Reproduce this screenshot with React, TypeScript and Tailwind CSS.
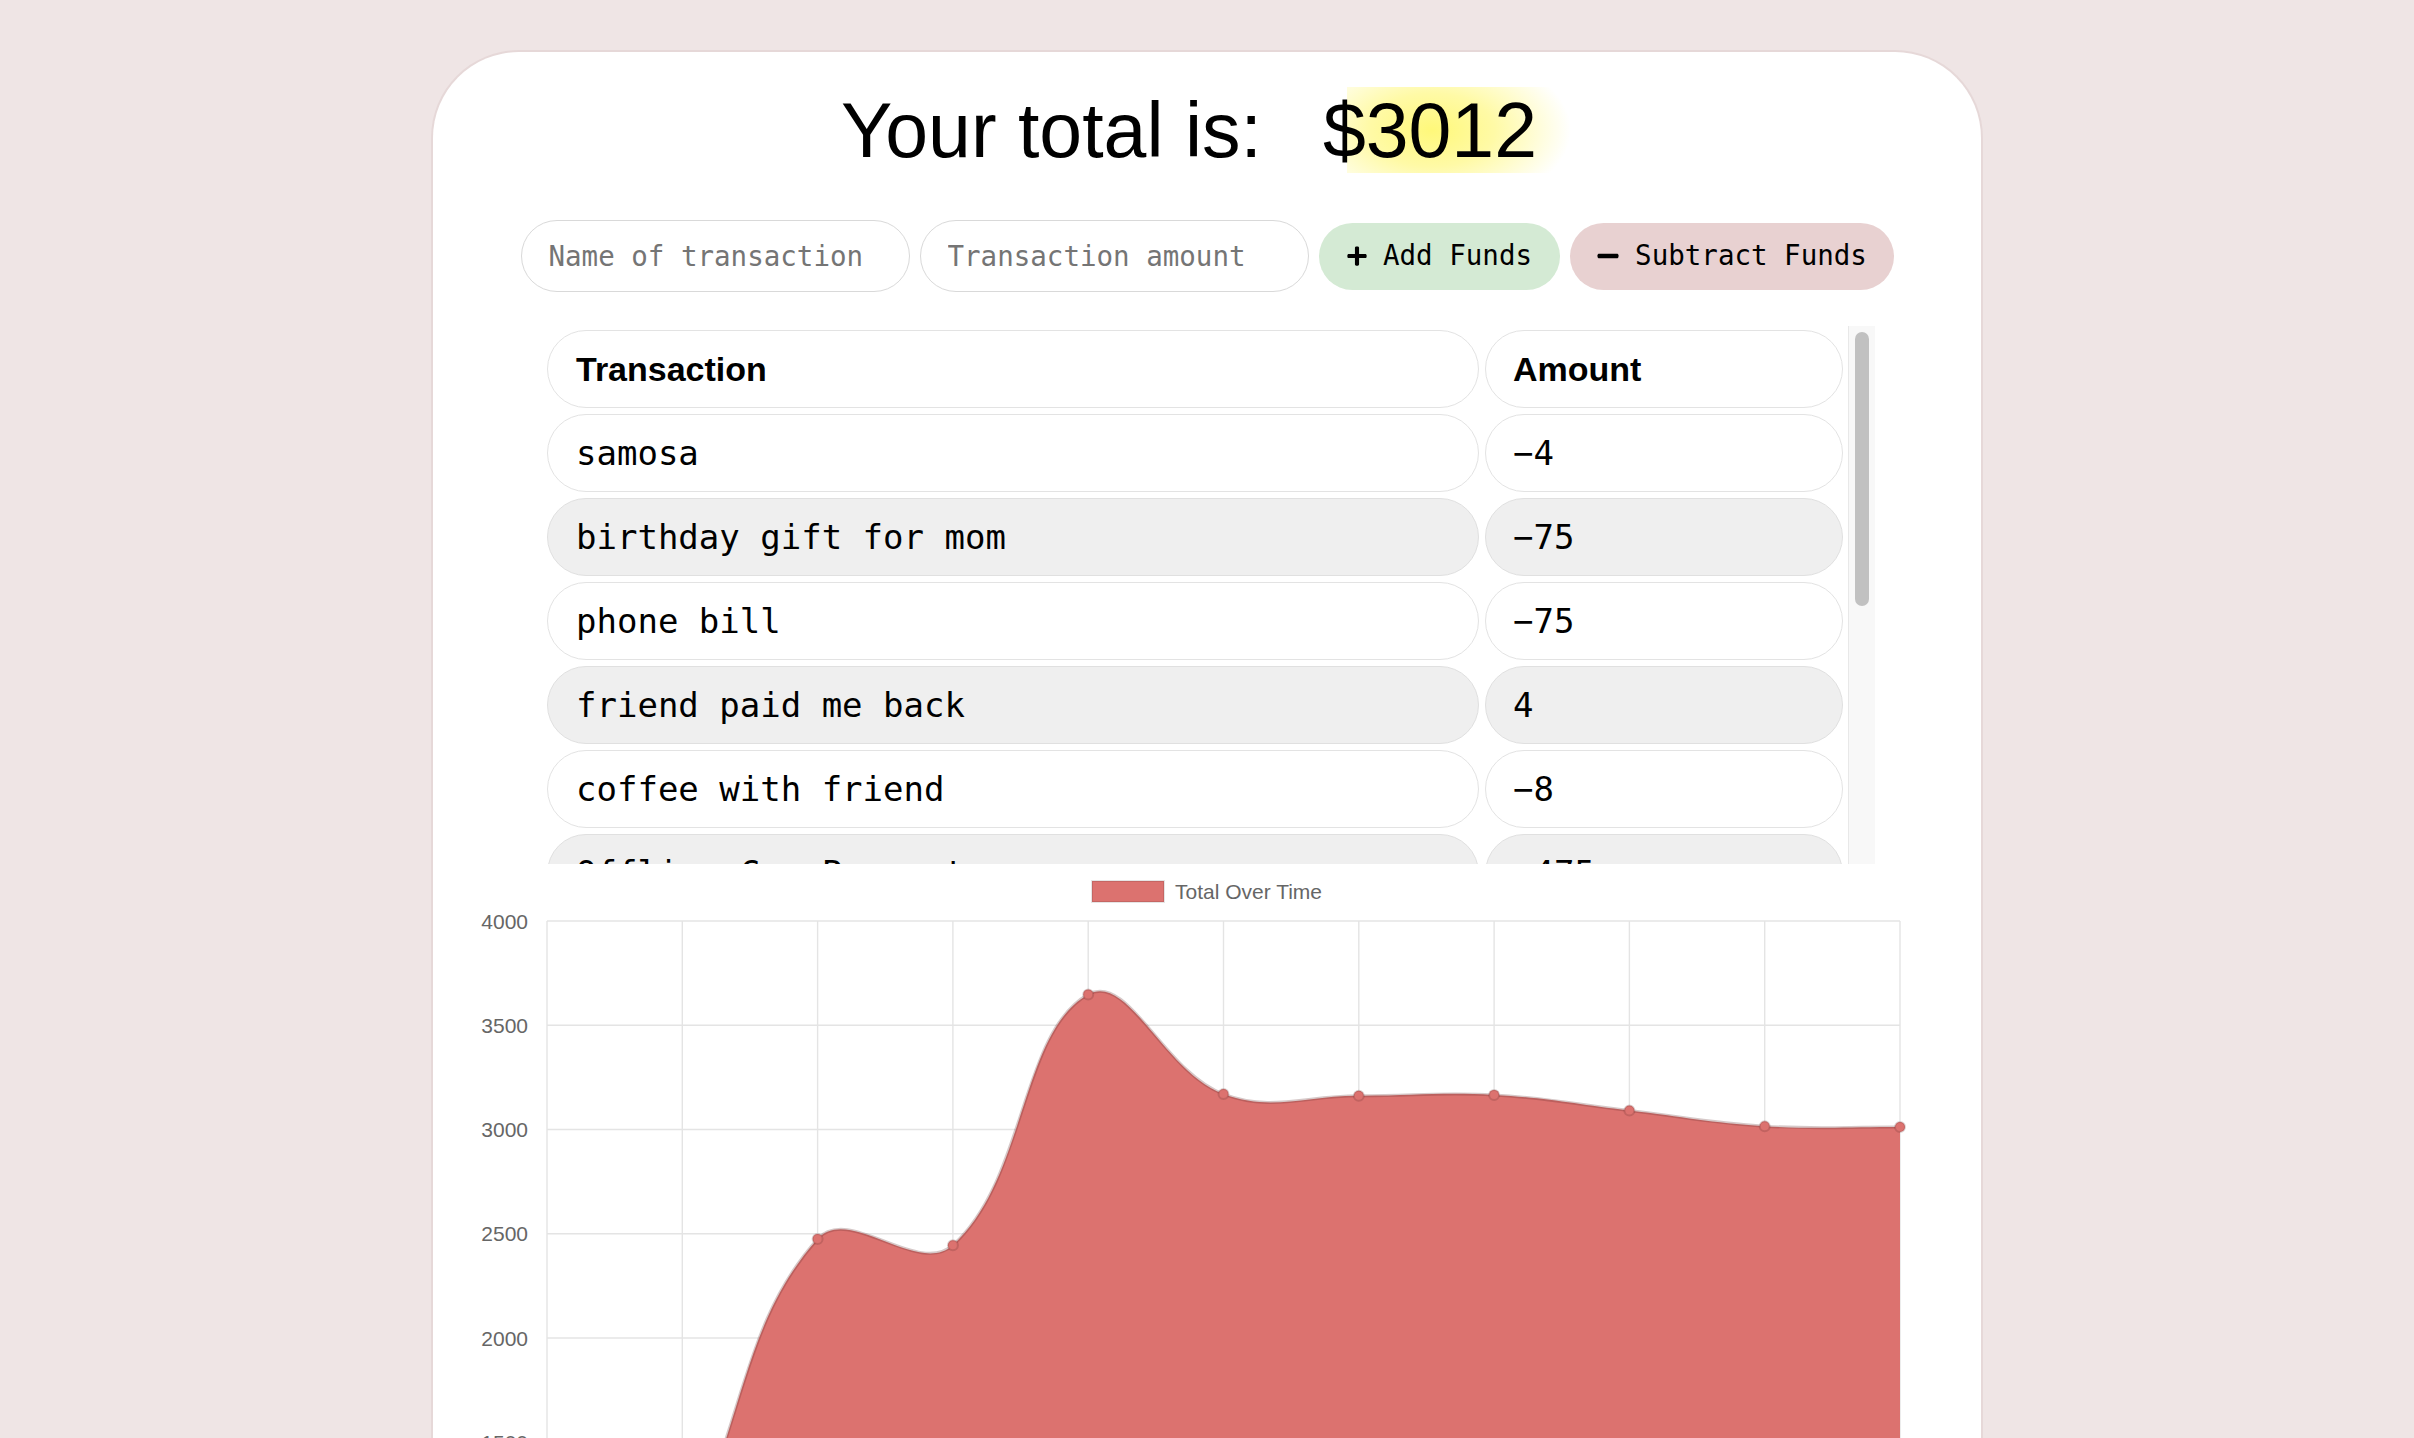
import React from "react";
import { FaPlus, FaMinus } from "react-icons/fa";

const rows: [string, string][] = [
  ["samosa", "−4"],
  ["birthday gift for mom", "−75"],
  ["phone bill", "−75"],
  ["friend paid me back", "4"],
  ["coffee with friend", "−8"],
  ["Offline Car Payment", "−475"],
];

const values = [0, 1000, 2475, 2445, 3648, 3170, 3162, 3166, 3091, 3016, 3012];

const X0 = 114;
const STEP = 135.3;
const yOf = (v: number) => 57 + (4000 - v) * 0.2085;

type P = { x: number; y: number };

function buildPath(pts: P[], t = 0.4) {
  const cps = pts.map((p, i) => {
    const prev = pts[i - 1] || p;
    const next = pts[i + 1] || p;
    const d01 = Math.hypot(p.x - prev.x, p.y - prev.y);
    const d12 = Math.hypot(next.x - p.x, next.y - p.y);
    let s01 = d01 / (d01 + d12);
    let s12 = d12 / (d01 + d12);
    if (isNaN(s01)) s01 = 0;
    if (isNaN(s12)) s12 = 0;
    const fa = t * s01;
    const fb = t * s12;
    return {
      c1: { x: p.x - fa * (next.x - prev.x), y: p.y - fa * (next.y - prev.y) },
      c2: { x: p.x + fb * (next.x - prev.x), y: p.y + fb * (next.y - prev.y) },
    };
  });
  let d = `M ${pts[0].x} ${pts[0].y}`;
  for (let i = 1; i < pts.length; i++) {
    const a = cps[i - 1].c2;
    const b = cps[i].c1;
    d += ` C ${a.x} ${a.y} ${b.x} ${b.y} ${pts[i].x} ${pts[i].y}`;
  }
  return d;
}

function Chart() {
  const pts = values.map((v, i) => ({ x: X0 + i * STEP, y: yOf(v) }));
  const line = buildPath(pts);
  const bottom = yOf(0);
  const area = `${line} L ${pts[pts.length - 1].x} ${bottom} L ${pts[0].x} ${bottom} Z`;
  const ticks = [4000, 3500, 3000, 2500, 2000, 1500, 1000, 500, 0];
  const right = X0 + 10 * STEP;
  return (
    <svg width="1548" height="620" className="block" style={{ fontFamily: '"Liberation Sans", Arial, sans-serif' }}>
      <rect x="659" y="17" width="72" height="21" fill="#dc726f" stroke="rgba(0,0,0,0.1)" strokeWidth="2" />
      <text x="742" y="34.5" fontSize="21" fill="#666">Total Over Time</text>
      {ticks.map((tv) => (
        <g key={tv}>
          <line x1={X0} x2={right} y1={yOf(tv)} y2={yOf(tv)} stroke="#e4e4e4" strokeWidth="1.6" />
          <text x="95" y={yOf(tv) + 7.5} fontSize="21" fill="#666" textAnchor="end">
            {tv}
          </text>
        </g>
      ))}
      {values.map((_, i) => (
        <line key={i} x1={X0 + i * STEP} x2={X0 + i * STEP} y1={yOf(4000)} y2={bottom + 10} stroke="#e4e4e4" strokeWidth="1.4" />
      ))}
      <path d={area} fill="#dc726f" />
      <path d={line} fill="none" stroke="rgba(90,40,40,0.25)" strokeWidth="3" />
      {pts.map((p, i) => (
        <circle key={i} cx={p.x} cy={p.y} r="5" fill="#dc726f" stroke="rgba(90,40,40,0.2)" strokeWidth="2" />
      ))}
    </svg>
  );
}

export default function App() {
  const mono = { fontFamily: '"DejaVu Sans Mono", "Liberation Mono", monospace' };
  const sans = { fontFamily: '"Liberation Sans", Arial, sans-serif' };
  return (
    <div className="h-[1438px] overflow-hidden bg-[#efe5e5] pt-[50px]">
      <div className="mx-auto h-[1420px] w-[1552px] rounded-t-[88px] border-2 border-b-0 border-[#e6d8d8] bg-white">
        {/* title */}
        <div className="mt-[40px] flex justify-center text-[77px] leading-[77px] text-black" style={sans}>
          <span>Your total is:</span>
          <span className="relative ml-[61px] pr-[36px]">
            <span className="absolute left-[24px] top-[-5px] h-[86px] w-[224px] bg-[radial-gradient(ellipse_62%_95%_at_38%_50%,#fff87a_0%,#fffaa6_45%,rgba(255,255,255,0)_100%)]" />
            <span className="relative">$3012</span>
          </span>
        </div>

        {/* inputs */}
        <div className="mt-[51px] flex items-center justify-center gap-[10px]" style={mono}>
          <input
            placeholder="Name of transaction"
            className="h-[72px] w-[389px] rounded-full border-[1.5px] border-[#d9d9d9] bg-white pl-[27px] text-[27.5px] text-black outline-none placeholder:text-[#757575]"
            style={mono}
          />
          <input
            placeholder="Transaction amount"
            className="h-[72px] w-[389px] rounded-full border-[1.5px] border-[#d9d9d9] bg-white pl-[27px] text-[27.5px] text-black outline-none placeholder:text-[#757575]"
            style={mono}
          />
          <button
            className="flex h-[67px] w-[241px] items-center justify-center gap-[15px] rounded-full bg-[#d4ead4] text-[27.5px] text-black"
            style={mono}
          >
            <FaPlus className="h-[22px] w-[22px]" />
            <span>Add Funds</span>
          </button>
          <button
            className="flex h-[67px] w-[324px] items-center justify-center gap-[15px] rounded-full bg-[#e8d1d1] text-[27.5px] text-black"
            style={mono}
          >
            <FaMinus className="h-[24px] w-[24px]" />
            <span>Subtract Funds</span>
          </button>
        </div>

        {/* table */}
        <div className="mt-[34px] ml-[114px] flex h-[538px] w-[1328px] gap-[5px]">
          <div className="flex w-[1296px] flex-col gap-[6px] overflow-hidden pt-[4px]">
            <div className="flex gap-[6px]">
              <div className="flex h-[78px] w-[932px] shrink-0 items-center rounded-full border-[1.5px] border-[#e3e3e3] bg-white pl-[28px] text-[34px] font-bold text-black" style={sans}>
                Transaction
              </div>
              <div className="flex h-[78px] w-[358px] shrink-0 items-center rounded-full border-[1.5px] border-[#e3e3e3] bg-white pl-[27px] text-[34px] font-bold text-black" style={sans}>
                Amount
              </div>
            </div>
            {rows.map(([name, amt], i) => {
              const gray = i % 2 === 1;
              return (
                <div key={name} className="flex gap-[6px]">
                  <div
                    className={
                      gray
                        ? "flex h-[78px] w-[932px] shrink-0 items-center rounded-full border-[1.5px] border-[#e0e0e0] bg-[#efefef] pl-[28px] text-[34px] text-black"
                        : "flex h-[78px] w-[932px] shrink-0 items-center rounded-full border-[1.5px] border-[#e3e3e3] bg-white pl-[28px] text-[34px] text-black"
                    }
                    style={mono}
                  >
                    {name}
                  </div>
                  <div
                    className={
                      gray
                        ? "flex h-[78px] w-[358px] shrink-0 items-center rounded-full border-[1.5px] border-[#e0e0e0] bg-[#efefef] pl-[27px] text-[34px] text-black"
                        : "flex h-[78px] w-[358px] shrink-0 items-center rounded-full border-[1.5px] border-[#e3e3e3] bg-white pl-[27px] text-[34px] text-black"
                    }
                    style={mono}
                  >
                    {amt}
                  </div>
                </div>
              );
            })}
          </div>
          <div className="relative h-full w-[27px] shrink-0 border-l border-[#e8e8e8] bg-[#f8f8f8]">
            <div className="absolute left-[6px] top-[6px] h-[274px] w-[14px] rounded-full bg-[#c1c1c1]" />
          </div>
        </div>

        {/* chart */}
        <Chart />
      </div>
    </div>
  );
}
